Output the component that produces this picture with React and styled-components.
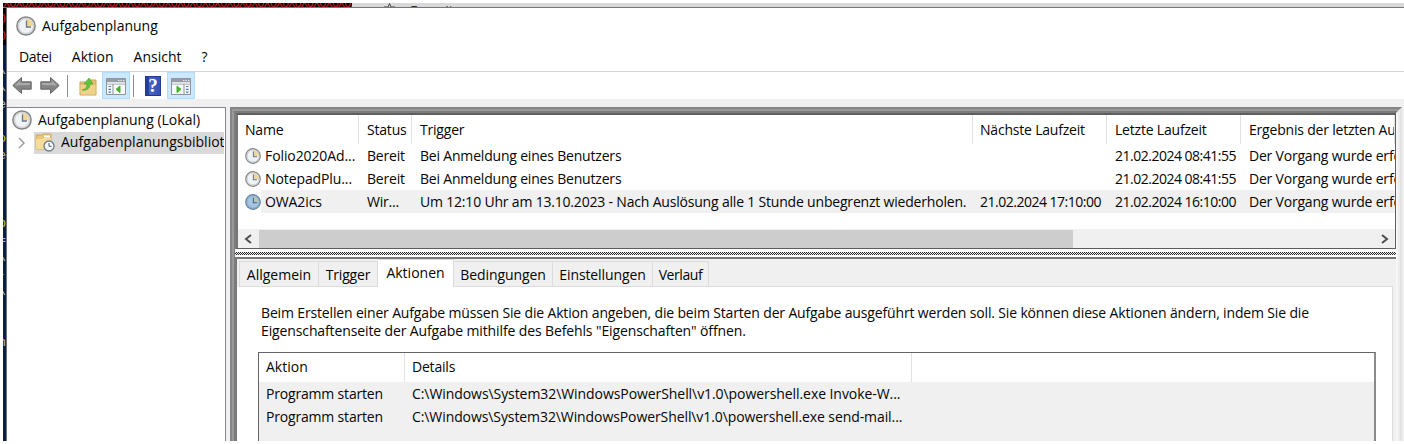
import React from 'react';
import styled, { createGlobalStyle } from 'styled-components';

const Global = createGlobalStyle`
  * { box-sizing: border-box; }
  body { margin: 0; background: #fff; font: 14px/20px "Open Sans", "Noto Sans", sans-serif; color: #050505; overflow: hidden; }
  svg { display: block; flex: none; }
`;
const Desktop = styled.div`
  width: 1404px; height: 444px; padding: 3px 0 3px 3px; background: #fff;
  display: flex; flex-direction: column; overflow: hidden;
`;
const Behind = styled.div` display: flex; height: 5px; flex: none; border-bottom: 1px solid #777; `;
const Console = styled.div`
  width: 349px; overflow: hidden; background: #0a0000; color: #c41f1f;
  font: 12px/3px "Liberation Mono", monospace; letter-spacing: -1px; white-space: nowrap;
`;
const BehindBar = styled.div`
  flex: 1; background: #d9d9d9; overflow: hidden; padding-left: 32px; display: flex; gap: 15px; color: #333; line-height: 15px;
`;
const Body = styled.div` display: flex; flex: 1; min-height: 0; `;
const Strip = styled.div`
  width: 4px; flex: none; overflow: hidden; border-right: 1px solid #6c717b; padding-top: 3px;
  background: linear-gradient(#100000 37px, #0a1d4d 37px);
  display: flex; flex-direction: column; align-items: flex-end;
`;
const Glyph = styled.div` height: 17px; flex: none; font: 13px/17px "Liberation Mono", monospace; color: ${p => p.$c}; `;
const Win = styled.div` flex: 1; min-width: 0; display: flex; flex-direction: column; background: #fff; `;
const Title = styled.div` height: 36px; flex: none; display: flex; align-items: center; gap: 6px; padding-left: 9px; `;
const Menu = styled.div` height: 27px; flex: none; display: flex; gap: 20px; padding: 3px 0 0 12px; `;
const Tools = styled.div`
  height: 28px; flex: none; border-top: 1px solid #d5d5d5; display: flex; align-items: center; padding-left: 5px;
`;
const Tool = styled.div`
  width: 28px; height: 27px; display: flex; align-items: center; justify-content: center; padding-top: 2px;
  ${p => p.$on && 'background:#cce8ff;border:1px solid #b2dcfb;'}
`;
const Gap = styled.div` width: 8px; `;
const Sep = styled.div` width: 1px; height: 22px; background: #8c8c8c; margin: 0 ${p => p.$r}px 0 ${p => p.$l}px; `;
const Work = styled.div` flex: 1; min-height: 0; display: flex; background: #f0f0f0; padding-top: 8px; `;
const Tree = styled.div`
  width: 219px; flex: none; background: #fff; border: solid #828790; border-width: 1px 1px 0 0; overflow: hidden;
  margin-right: 4px;
`;
const Node = styled.div` height: 23px; display: flex; align-items: center; white-space: nowrap; padding-left: ${p => p.$pad}px; gap: ${p => p.$gap}px; `;
const Picked = styled.div` background: #d9d9d9; height: 22px; width: 190px; display: flex; align-items: center; gap: 6px; padding: 0 0 2px 1px; overflow: hidden; line-height: 20px; `;
const Bevel = styled.div`
  flex: 1; min-width: 0; min-height: 0; display: flex; flex-direction: column;
  border: solid; border-width: 2px 2px 0 2px; border-color: ${p => p.$dark} ${p => p.$light} #fff ${p => p.$dark};
`;
const Right = styled.div` flex: 1; min-width: 0; display: flex; flex-direction: column; padding-right: 2px; `;
const List = styled.div`
  height: 136px; flex: none; display: flex; flex-direction: column; overflow: hidden; background: #fff;
  border: 1px solid #5f5f5f; border-width: 2px 1px 1px 2px; border-left-color: #757575;
`;
const Row = styled.div`
  display: grid; grid-template-columns: ${p => p.$cols}; height: ${p => p.$h || 23}px; flex: none; white-space: nowrap;
`;
const Cell = styled.div`
  overflow: hidden; padding-left: ${p => p.$pad || 7}px; line-height: ${p => p.$lh || 23}px; letter-spacing: ${p => p.$ls || 0}px;
  ${p => p.$head && 'border-right:1px solid #e2e2e2;'}
  ${p => p.$sel && 'background:#f0f0f0;'}
`;
const NameCell = styled.div` display: flex; align-items: center; padding-left: 7px; `;
const Name = styled.div` flex: 1; padding-left: 4px; line-height: 23px; letter-spacing: -.1px; ${p => p.$sel && 'background:#f0f0f0;'} `;
const Scroll = styled.div`
  margin-top: auto; height: 19px; flex: none; background: #f0f0f0; display: flex; align-items: center; justify-content: space-between; padding: 0 6px;
`;
const Thumb = styled.div` width: 814px; height: 18px; background: #cdcdcd; margin: 0 auto 0 7px; `;
const Splitter = styled.div`
  height: 8px; flex: none; border: solid #fff; border-width: 3px 0 2px; margin-left: -1px;
  background: conic-gradient(#222 25%, #eee 0 50%, #222 0 75%, #eee 0) 0 0 / 2px 2px;
`;
const Detail = styled.div` flex: 1; min-height: 0; display: flex; flex-direction: column; border-top: 2px solid #777; border-left: 1px solid #777; background: #f0f0f0; `;
const Tabs = styled.div` height: 28px; flex: none; display: flex; align-items: flex-end; padding-left: 2px; `;
const Tab = styled.div`
  width: ${p => p.$w}px; height: ${p => (p.$on ? 28 : 26)}px; flex: none; text-align: center; white-space: nowrap;
  line-height: 26px; letter-spacing: ${p => p.$ls || 0}px; background: ${p => (p.$on ? '#fff' : '#f0f0f0')};
  border: 1px solid #dcdcdc; border-width: 1px 1px ${p => (p.$on ? 0 : 1)}px ${p => (p.$first ? 1 : 0)}px;
`;
const TabsRest = styled.div` flex: 1; border-bottom: 1px solid #dcdcdc; margin-right: 3px; `;
const Page = styled.div` flex: 1; min-height: 0; background: #fff; margin-right: 3px; padding: 17px 16px 0 21px; border-right: 1px solid #dcdcdc; display: flex; flex-direction: column; `;
const Note = styled.div` line-height: 18px; padding-left: 3px; white-space: nowrap; letter-spacing: ${p => p.$ls}px; `;
const Actions = styled.div` flex: 1; margin-top: 12px; border: solid #646464; border-width: 1px 2px 0 1px; border-right-color: #8a8a8a; background: #f0f0f0; `;
const HeadBg = styled.div` background: #fff; `;
const T = styled.span` letter-spacing: ${p => p.$ls || 0}px; white-space: nowrap; `;

const Clock = ({ s = 20, blue }) => (
  <svg width={s} height={s} viewBox="0 0 20 20">
    <circle cx="10" cy="10" r="9.1" fill={blue ? '#93b7d6' : '#dfe3e6'} stroke={blue ? '#66839e' : '#858585'} strokeWidth="1.5" />
    <circle cx="10" cy="10" r="7.4" fill={blue ? '#a5c6e2' : '#f0f3f6'} stroke={blue ? '#86a9c8' : '#c0c5ca'} strokeWidth=".8" />
    <path d="M10 10V3a7 7 0 0 1 7 7z" fill={blue ? '#b9c7b9' : '#f0d796'} />
    <path d="M10.500 4.500V11H15" fill="none" stroke={blue ? '#46617f' : '#66788c'} strokeWidth="1.300" />
  </svg>
);
const Arrow = ({ flip }) => (
  <svg width="20" height="19" viewBox="0 0 20 19">
    <g transform={flip ? 'translate(20 0) scale(-1 1)' : undefined}>
      <path d="M.8 9.500 9.500 1.500v4.300h9.700v7.400H9.500v4.300z" fill="#858585" stroke="#666" />
      <path d="M3 9.500 8.500 4v3h9.500v2z" fill="#a9a9a9" />
    </g>
  </svg>
);
const Folder = () => (
  <svg width="18" height="19" viewBox="0 0 18 19">
    <path d="M1 5h6l2-2h8v15H1z" fill="#e3c074" stroke="#c9a556" /><path d="M1.500 8h15v9.500h-15z" fill="#efd28a" />
    <path d="M3 13c4-1 5-3 5-6H5l5-6 4 6h-3c0 4-3 7-8 6z" fill="#62c43c" stroke="#43a029" strokeWidth=".6" />
  </svg>
);
const Pane = ({ right }) => (
  <svg width="20" height="17" viewBox="0 0 20 18" preserveAspectRatio="none">
    <path d="M.5.5h19v17H.5z" fill="#f7f9fb" stroke="#8b9097" /><path d="M1 1h18v3.500H1z" fill="#989ea5" />
    <path d="M12 2h1.500v1H12zm2.500 0H16v1h-1.500zm2.500 0h1.500v1H17z" fill="#fff" />
    <path d="M1 6.500h18" stroke="#a8adb3" />
    {right ? (
      <><path d="M13 6.500v11" stroke="#858b93" /><path d="M15 9h2.500M15 12h2.500M15 15h2.500" stroke="#4a7ab5" strokeWidth="1.200" /><path d="m6 8.500 4 3.500-4 3.500z" fill="#45b52c" stroke="#45b52c" /></>
    ) : (
      <><path d="M7 6.500v11" stroke="#858b93" /><path d="M2.500 9H5M2.500 12H5M2.500 15H5" stroke="#4a7ab5" strokeWidth="1.200" /><path d="m14 8.500-4 3.500 4 3.500z" fill="#45b52c" stroke="#45b52c" /></>
    )}
  </svg>
);
const HelpBox = styled.div`
  width: 16px; height: 20px; background: linear-gradient(90deg, #27409a 3px, #4565c9 3px, #3451b5); color: #fff;
  font: bold 19px/18px "Liberation Serif", serif; text-align: center; border: 1px solid #243a87; margin-top: -2px;
`;
const TaskFolder = () => (
  <svg width="20" height="20" viewBox="0 0 20 20">
    <path d="M1 3h6l1-1h8v15H1z" fill="#e8c578" stroke="#d0aa5a" /><path d="M9 3.500h6v2H9z" fill="#fff" /><path d="M1 7h6l2-1h7v11H1z" fill="#f5dc98" />
    <circle cx="14" cy="14" r="5" fill="#f4f6f8" stroke="#6f7c88" strokeWidth="1.300" /><path d="M14 11v3.300h2.500" fill="none" stroke="#4d5f73" />
  </svg>
);
const Star = () => (
  <svg width="11" height="10" viewBox="0 0 11 10"><path d="M5.500 .5 7 4h4L8 6.500 9 10 5.500 8 2 10l1-3.500L0 4h4z" fill="none" stroke="#444" /></svg>
);
const Chevron = ({ d, w = 8, c = '#505050', sw = 2 }) => (
  <svg width={w} height="12" viewBox="0 0 8 12"><path d={d} fill="none" stroke={c} strokeWidth={sw} /></svg>
);

const COLS = '121px 53px 561px 134px 134px 1fr';
const ACT = '146px 507px 1fr';
const TASKS = [
  ['Folio2020Ad...', 'Bereit', 'Bei Anmeldung eines Benutzers', '', '21.02.2024 08:41:55'],
  ['NotepadPlu...', 'Bereit', 'Bei Anmeldung eines Benutzers', '', '21.02.2024 08:41:55'],
  ['OWA2ics', 'Wir...', 'Um 12:10 Uhr am 13.10.2023 - Nach Auslösung alle 1 Stunde unbegrenzt wiederholen.', '21.02.2024 17:10:00', '21.02.2024 16:10:00'],
];
const SPACING = [-0.2, -0.19, -0.5, -0.5, -0.2];
const R = '#d02020', W = '#b9b9b9', Y = '#c5c52a';
const LINES = [['0', R], ['0', R], [' ', W], ['\\', W], ['\\', W], ['e', W], [' ', W], ['o', Y], ['e', Y], [' ', W], [' ', W], [' ', W], ['p', Y], ['=', W], ['\\', W], ['-', '#3ba9a0'], ['\\', W], [' ', W], [' ', W], ['n', W]];

export default function App() {
  return (
    <Desktop>
      <Global />
      <Behind><Console>{'XOXO'.repeat(15)}</Console><BehindBar><Star /><T $ls={-0.2}>Favoriten</T></BehindBar></Behind>
      <Body>
        <Strip>{LINES.map(([g, c], i) => <Glyph key={i} $c={c}>{g}</Glyph>)}</Strip>
        <Win>
          <Title><Clock /><T>Aufgabenplanung</T></Title>
          <Menu><T $ls={-0.3}>Datei</T><T>Aktion</T><T>Ansicht</T><T>?</T></Menu>
          <Tools>
            <Arrow /><Gap /><Arrow flip /><Sep $l={7} $r={6} />
            <Tool><Folder /></Tool><Tool $on><Pane /></Tool><Sep $l={3} $r={5} /><Tool><HelpBox>?</HelpBox></Tool><Tool $on><Pane right /></Tool>
          </Tools>
          <Work>
            <Tree>
              <Node $pad={5} $gap={6}><Clock /><T>Aufgabenplanung (Lokal)</T></Node>
              <Node $pad={11} $gap={8}><Chevron d="M1 1l5 5-5 5" c="#a0a0a0" sw={1.5} /><Picked><TaskFolder /><T>Aufgabenplanungsbibliothek</T></Picked></Node>
            </Tree>
            <Right>
              <Bevel $dark="#858585" $light="#e3e3e3"><Bevel $dark="#999" $light="#ececec"><Bevel $dark="#7c7c7c" $light="#f6f6f6">
                <List>
                  <Row $cols={COLS} $h={29}>
                    {['Name', 'Status', 'Trigger', 'Nächste Laufzeit', 'Letzte Laufzeit', 'Ergebnis der letzten Ausführung'].map((t, i) => <Cell key={t} $head $pad={i && i !== 3 ? 8 : 7} $lh={29} $ls={-0.2}>{t}</Cell>)}
                  </Row>
                  {TASKS.map((r, i) => (
                    <Row key={r[0]} $cols={COLS}>
                      <NameCell><Clock s={16} blue={i === 2} /><Name $sel={i === 2}>{r[0]}</Name></NameCell>
                      {[...r.slice(1), 'Der Vorgang wurde erfolgreich beendet.'].map((t, j) => <Cell key={j} $sel={i === 2} $pad={j === 2 ? 7 : 8} $ls={SPACING[j]}>{t}</Cell>)}
                    </Row>
                  ))}
                  <Scroll><Chevron d="M7 2L2 6l5 4" /><Thumb /><Chevron d="M1 2l5 4-5 4" /></Scroll>
                </List>
                <Splitter />
                <Detail>
                  <Tabs>
                    <Tab $w={80} $first>Allgemein</Tab><Tab $w={59} $ls={-0.2}>Trigger</Tab><Tab $w={76} $on>Aktionen</Tab>
                    <Tab $w={99} $ls={-0.1}>Bedingungen</Tab><Tab $w={100} $ls={-0.1}>Einstellungen</Tab><Tab $w={56} $ls={-0.4}>Verlauf</Tab><TabsRest />
                  </Tabs>
                  <Page>
                    <Note $ls={-0.155}>Beim Erstellen einer Aufgabe müssen Sie die Aktion angeben, die beim Starten der Aufgabe ausgeführt werden soll. Sie können diese Aktionen ändern, indem Sie die</Note>
                    <Note $ls={-0.12}>Eigenschaftenseite der Aufgabe mithilfe des Befehls "Eigenschaften" öffnen.</Note>
                    <Actions>
                      <HeadBg><Row $cols={ACT} $h={29}><Cell $head $lh={28}>Aktion</Cell><Cell $head $lh={28} $ls={-0.2}>Details</Cell></Row></HeadBg>
                      <Row $cols={ACT}><Cell $ls={-0.18}>Programm starten</Cell><Cell $ls={-0.07}>C:\Windows\System32\WindowsPowerShell\v1.0\powershell.exe Invoke-W...</Cell></Row>
                      <Row $cols={ACT}><Cell $ls={-0.18}>Programm starten</Cell><Cell $ls={-0.09}>C:\Windows\System32\WindowsPowerShell\v1.0\powershell.exe send-mail...</Cell></Row>
                    </Actions>
                  </Page>
                </Detail>
              </Bevel></Bevel></Bevel>
            </Right>
          </Work>
        </Win>
      </Body>
    </Desktop>
  );
}
